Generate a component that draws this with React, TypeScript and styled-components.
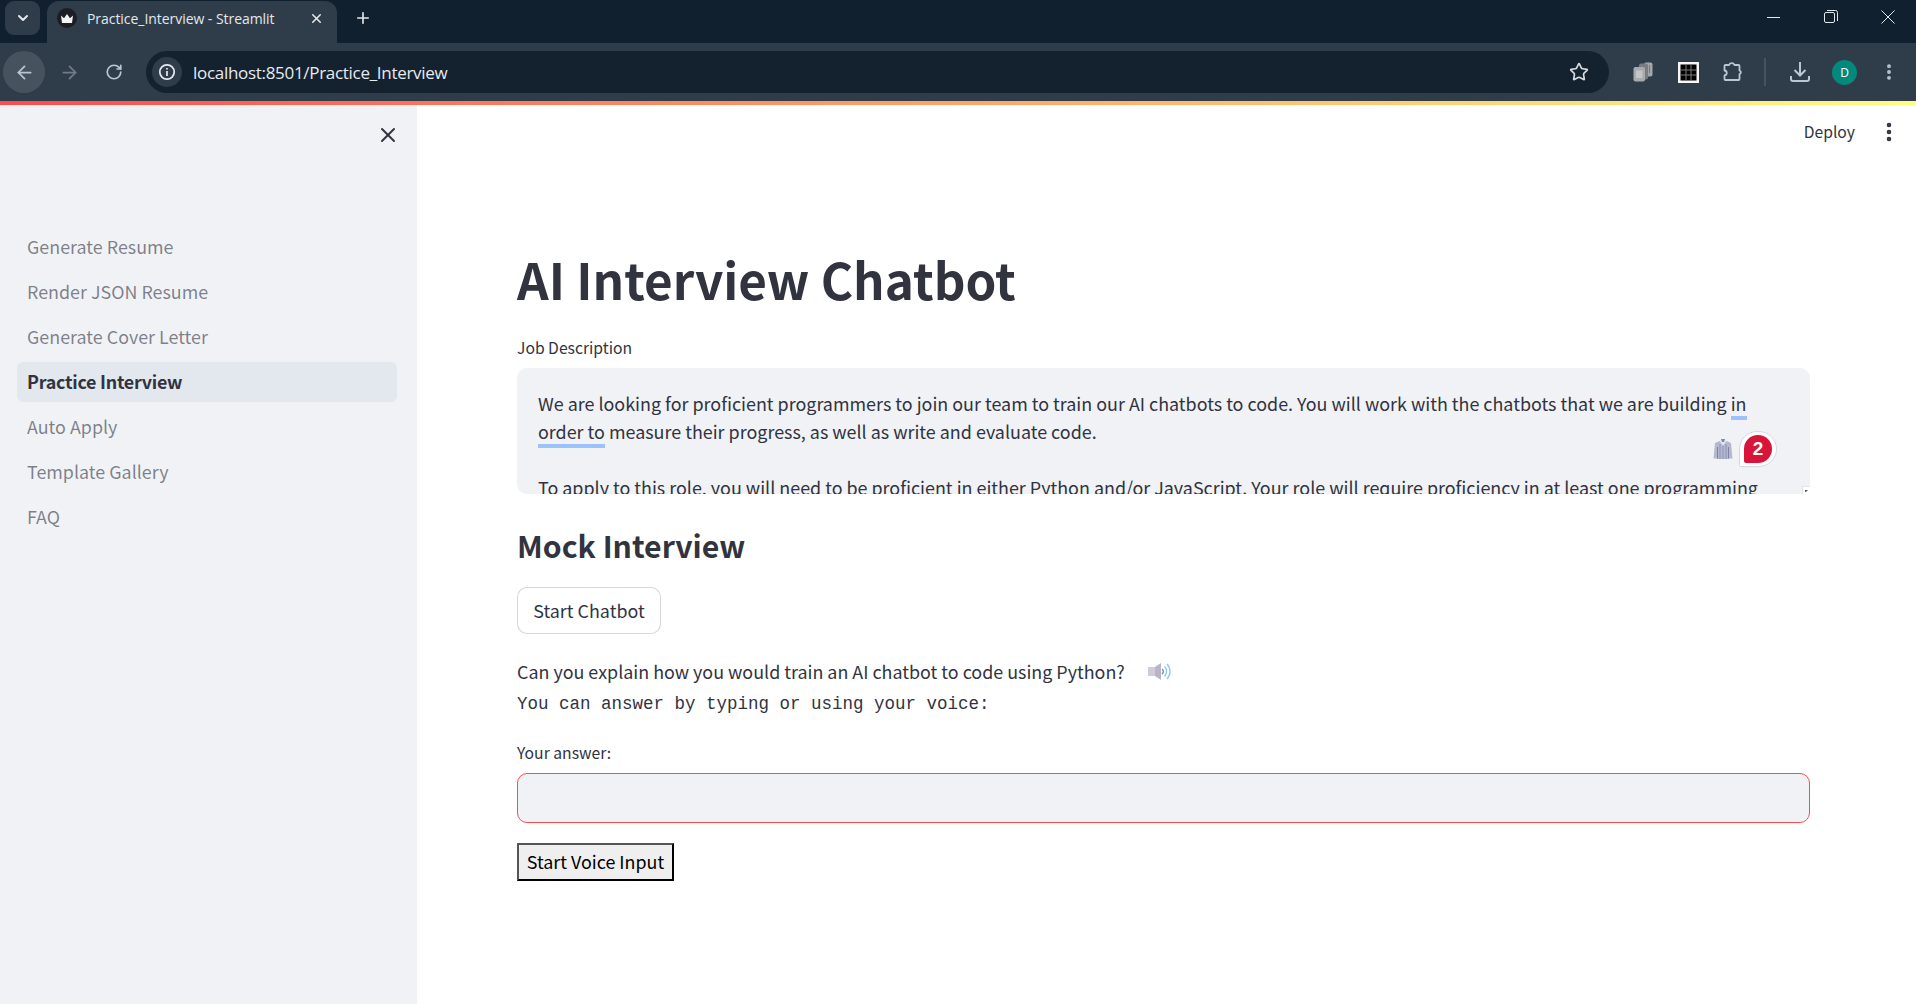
import React from 'react';
import styled, { createGlobalStyle } from 'styled-components';
import { ArrowLeft, ArrowRight, ChevronDown, EllipsisVertical, Plus, RotateCw, Star, X } from 'lucide-react';

const sans = '"Noto Sans CJK SC", "Noto Sans", sans-serif';
const chromeFont = '"Open Sans", "Noto Sans", sans-serif';

const GlobalStyle = createGlobalStyle`
  html, body {
    margin: 0;
    height: 100%;
    overflow: hidden;
    background: #fff;
  }
  #root {
    height: 100%;
  }
  * {
    box-sizing: border-box;
  }
`;

const Page = styled.div`
  display: flex;
  flex-direction: column;
  height: 1004px;
  font-family: ${sans};
  color: #31333f;
`;

const TabStrip = styled.div`
  display: flex;
  align-items: flex-start;
  height: 43px;
  background: #11202e;
  color: #e3e8ed;
`;

const TabSearch = styled.div`
  display: flex;
  align-items: center;
  justify-content: center;
  width: 35px;
  height: 34px;
  margin: 1px 7px 0 5px;
  border-radius: 9px;
  background: #2f3d4b;
`;

const Tab = styled.div`
  display: flex;
  align-items: center;
  width: 290px;
  height: 42px;
  margin-top: 1px;
  padding: 0 0 8px 10px;
  border-radius: 12px 12px 0 0;
  background: #2f3d4b;
  font-family: ${chromeFont};
  font-size: 14px;
  letter-spacing: -0.05px;
`;

const Favicon = styled.div`
  display: flex;
  align-items: center;
  justify-content: center;
  width: 20px;
  height: 20px;
  margin-right: 10px;
  border-radius: 50%;
  background: #1c1d26;
`;

const TabTitle = styled.span`
  flex: 1;
  white-space: nowrap;
`;

const TabClose = styled.div`
  display: flex;
  width: 20px;
  margin-right: 11px;
  justify-content: center;
`;

const NewTab = styled.div`
  display: flex;
  margin: 9px 0 0 17px;
`;

const WindowControls = styled.div`
  display: flex;
  align-items: center;
  margin-left: auto;
  height: 34px;
`;

const WindowButton = styled.div`
  display: flex;
  align-items: center;
  justify-content: center;
  width: 57px;
`;

const Toolbar = styled.div`
  display: flex;
  align-items: center;
  height: 58px;
  padding: 0 3px 0 3px;
  background: #2f3d4b;
  color: #b8c7d6;
`;

const NavButton = styled.div<{ $active?: boolean }>`
  display: flex;
  align-items: center;
  justify-content: center;
  flex: none;
  width: 42px;
  height: 42px;
  margin-right: 3px;
  border-radius: 50%;
  background: ${(p) => (p.$active ? '#46535f' : 'transparent')};
`;

const Omnibox = styled.div`
  display: flex;
  align-items: center;
  flex: 1;
  height: 42px;
  margin: 0 13px 0 8px;
  padding: 0 20px 0 6px;
  border-radius: 21px;
  background: #14222f;
`;

const InfoBadge = styled.div`
  display: flex;
  align-items: center;
  justify-content: center;
  width: 30px;
  height: 30px;
  margin-right: 11px;
  border-radius: 50%;
  background: #2f3d4b;
`;

const UrlText = styled.span`
  flex: 1;
  font-family: ${chromeFont};
  font-size: 17px;
  letter-spacing: -0.3px;
  color: #e6ebf0;
`;

const ToolDivider = styled.div`
  width: 2px;
  height: 28px;
  margin: 0 13px 0 7px;
  background: #46535f;
`;

const Avatar = styled.div`
  display: flex;
  align-items: center;
  justify-content: center;
  width: 25px;
  height: 25px;
  margin: 0 11px 0 8px;
  border-radius: 50%;
  background: #03897b;
  color: #fff;
  font-family: ${chromeFont};
  font-size: 12px;
`;

const Gradient = styled.div`
  height: 4px;
  background: linear-gradient(90deg, #ff4b4b, #fffd80);
`;

const Body = styled.div`
  display: flex;
  flex: 1;
  min-height: 0;
`;

const Sidebar = styled.aside`
  width: 417px;
  flex: none;
  padding: 0 20px 0 17px;
  background: #f0f2f6;
`;

const SidebarClose = styled.div`
  display: flex;
  justify-content: flex-end;
  height: 122px;
  margin-right: -3px;
  padding: 18px 0 0;
  color: #31333f;
`;

const NavList = styled.nav`
  display: flex;
  flex-direction: column;
  gap: 5px;
`;

const NavItem = styled.a<{ $active?: boolean }>`
  display: flex;
  align-items: center;
  height: 40px;
  padding: 0 0 2px 10px;
  border-radius: 6px;
  font-size: 17.9px;
  font-weight: ${(p) => (p.$active ? 600 : 400)};
  letter-spacing: ${(p) => (p.$active ? '-0.25px' : '0')};
  color: ${(p) => (p.$active ? '#31333f' : 'rgba(49, 51, 63, 0.6)')};
  background: ${(p) => (p.$active ? '#e3e7ee' : 'transparent')};
`;

const Main = styled.main`
  flex: 1;
  padding: 0 106px 0 100px;
`;

const TopBar = styled.div`
  display: flex;
  align-items: center;
  justify-content: flex-end;
  height: 53px;
  margin-right: -106px;
`;

const DeployLabel = styled.span`
  font-size: 15.7px;
  margin-right: 22px;
`;

const Kebab = styled.div`
  display: flex;
  width: 24px;
  margin-right: 15px;
  justify-content: center;
`;

const Title = styled.h1`
  margin: 88px 0 0;
  font-size: 49.4px;
  line-height: 66px;
  font-weight: 700;
`;

const FieldLabel = styled.label`
  display: block;
  font-size: 15.7px;
  line-height: 24px;
`;

const JobLabel = styled(FieldLabel)`
  margin-top: 24px;
`;

const AnswerLabel = styled(FieldLabel)`
  margin-top: 23px;
`;

const JobBox = styled.div`
  position: relative;
  height: 126px;
  margin-top: 8px;
  padding: 21px 20px 0 21px;
  overflow: hidden;
  border-radius: 10px;
  background: #f0f2f6;
  font-size: 17.92px;
  line-height: 28px;
`;

const JobText = styled.p`
  margin: 0 0 28px;
`;

const Marked = styled.span`
  border-bottom: 4px solid #9cc2fb;
`;

const ShirtMark = styled.div`
  position: absolute;
  top: 70px;
  right: 77px;
  display: flex;
`;

const CountBadge = styled.div`
  position: absolute;
  top: 63px;
  right: 33px;
  display: flex;
  align-items: center;
  justify-content: center;
  width: 38px;
  height: 36px;
  border: 1.5px solid #d5d8e2;
  border-radius: 19px 19px 19px 2px;
  background: #fff;
`;

const CountInner = styled.div`
  display: flex;
  align-items: center;
  justify-content: center;
  width: 28px;
  height: 28px;
  border-radius: 50% 50% 50% 2px;
  background: #d9143a;
  color: #fff;
  font-family: "Liberation Sans", sans-serif;
  font-size: 19px;
  font-weight: 700;
`;

const ResizeHandle = styled.div`
  position: absolute;
  right: 0;
  bottom: 0;
  display: flex;
  align-items: center;
  justify-content: center;
  width: 8px;
  height: 8px;
  border-top: 1px solid #e2e4ea;
  border-left: 1px solid #e2e4ea;
  background: #fff;
`;

const ResizeDot = styled.div`
  width: 3px;
  height: 2px;
  background: #555;
`;

const Subtitle = styled.h2`
  margin: 29px 0 0;
  font-size: 30.2px;
  line-height: 44px;
  font-weight: 600;
`;

const OutlineButton = styled.button`
  display: block;
  width: 144px;
  height: 47px;
  margin-top: 20px;
  padding: 0 0 2px;
  border: 1px solid rgba(49, 51, 63, 0.2);
  border-radius: 10px;
  background: #fff;
  color: #31333f;
  font-family: ${sans};
  font-size: 17.9px;
`;

const QuestionRow = styled.div`
  display: flex;
  align-items: center;
  margin-top: 23px;
  font-size: 17.9px;
  line-height: 28px;
`;

const SpeakerWrap = styled.span`
  display: flex;
  margin-left: 23px;
`;

const MonoLine = styled.div`
  margin-top: 5px;
  font-family: "Liberation Mono", "DejaVu Sans Mono", monospace;
  font-size: 17.5px;
  line-height: 28px;
`;

const AnswerInput = styled.div`
  height: 50px;
  margin-top: 8px;
  border: 1px solid #ff4b4b;
  border-radius: 10px;
  background: #f0f2f6;
`;

const VoiceButton = styled.button`
  display: block;
  width: 157px;
  height: 38px;
  margin-top: 20px;
  padding: 0 0 2px;
  border: 2px solid #000;
  border-top-color: #555;
  border-left-color: #555;
  background: #efefef;
  color: #000;
  font-family: ${sans};
  font-size: 17.9px;
`;

const navPages = [
  'Generate Resume',
  'Render JSON Resume',
  'Generate Cover Letter',
  'Practice Interview',
  'Auto Apply',
  'Template Gallery',
  'FAQ',
];

function Crown() {
  return (
    <svg width="14" height="11" viewBox="0 0 14 11">
      <path d="M1 2.5 4 5.2 7 1l3 4.2 3-2.7-1 7.5H2z" fill="#f4f4f4" />
    </svg>
  );
}

function InfoIcon() {
  return (
    <svg width="18" height="18" viewBox="0 0 18 18" fill="none" stroke="#e6ebf0" strokeWidth="1.7">
      <circle cx="9" cy="9" r="7.2" />
      <path d="M9 8v5M9 5v1.6" />
    </svg>
  );
}

function CopiesIcon() {
  return (
    <svg width="20" height="20" viewBox="0 0 20 20">
      <rect x="11" y="0.5" width="8.5" height="14" rx="2" fill="#a4a7a9" />
      <path d="M14 3v8M16.5 3v8" stroke="#74797e" strokeWidth="1" />
      <rect x="6" y="1.5" width="9" height="16" rx="2" fill="#797d82" />
      <rect x="0.5" y="5" width="11.5" height="14.5" rx="2" fill="#a8aaac" />
      <rect x="3" y="8.5" width="6.5" height="7.5" fill="#c4c5c6" />
    </svg>
  );
}

function GridIcon() {
  return (
    <svg width="21" height="21" viewBox="0 0 21 21">
      <rect width="21" height="21" fill="#f6f6f6" />
      <rect x="2.5" y="2.5" width="16" height="16" fill="#000" />
      <path d="M8 2.5v16M13 2.5v16M2.5 8h16M2.5 13h16" stroke="#7d7d7d" strokeWidth="1" />
    </svg>
  );
}

function PuzzleIcon() {
  return (
    <svg width="22" height="22" viewBox="0 0 22 22" fill="none" stroke="#b8c7d6" strokeWidth="1.8" strokeLinejoin="round">
      <path d="M2.5 5a1 1 0 0 1 1-1H7a3 3 0 0 1 5.5 0h4a1 1 0 0 1 1 1v4.5a1.8 1.8 0 0 1 0 3.5V18a1 1 0 0 1-1 1H3.5a1 1 0 0 1-1-1v-3.5c3-.4 3-4.6 0-5z" />
    </svg>
  );
}

function DownloadIcon() {
  return (
    <svg width="22" height="22" viewBox="0 0 22 22" fill="none" stroke="#b8c7d6" strokeWidth="2">
      <path d="M11 1v13M5.5 9l5.5 5.5 5.5-5.5M2 15v3a2 2 0 0 0 2 2h14a2 2 0 0 0 2-2v-3" />
    </svg>
  );
}

function Minimize() {
  return (
    <svg width="14" height="14" viewBox="0 0 14 14" stroke="#e3e8ed" strokeWidth="1">
      <path d="M0 7.5h13" />
    </svg>
  );
}

function Restore() {
  return (
    <svg width="14" height="14" viewBox="0 0 14 14" fill="none" stroke="#e3e8ed" strokeWidth="1">
      <rect x="0.5" y="2.5" width="10" height="10" rx="1.5" />
      <path d="M3 0.5h8.5a2 2 0 0 1 2 2V11" />
    </svg>
  );
}

function CloseThin() {
  return (
    <svg width="14" height="14" viewBox="0 0 14 14" stroke="#e3e8ed" strokeWidth="1">
      <path d="M0.5 0.5l13 13M13.5 0.5l-13 13" />
    </svg>
  );
}

function ShirtIcon() {
  return (
    <svg width="20" height="22" viewBox="0 0 20 22">
      <path d="M6.5 3 2 5 0.5 20.5H4V21h12v-.5h3.5L18 5l-4.5-2z" fill="#b4b9d0" />
      <path d="M4.5 9v11.5M15.5 9v11.5" stroke="#7c83a3" strokeWidth="1" />
      <path d="M7 6v15M10 6v15M13 6v15" stroke="#8d94b1" strokeWidth="1" />
      <path d="M6.5 3 10 8l3.5-5-1.5-1.5H8z" fill="#e4e6ef" />
      <path d="M8 1h4l-1 3H9z" fill="#8088a6" />
    </svg>
  );
}

function SpeakerIcon() {
  return (
    <svg width="23" height="18" viewBox="0 0 23 18" fill="none">
      <path d="M0 5h7v9H0z" fill="#cfccd9" />
      <path d="M7 5l6-4v17l-6-4z" fill="#b9b5c9" />
      <path d="M14 7a3 3 0 0 1 0 5" stroke="#8f8aa5" strokeWidth="1.5" />
      <path d="M16.5 4.5a7 7 0 0 1 0 10M19 2a11 11 0 0 1 0 15" stroke="#8fc8f8" strokeWidth="1.4" />
    </svg>
  );
}

export default function App() {
  return (
    <Page>
      <GlobalStyle />
      <TabStrip>
        <TabSearch>
          <ChevronDown size={16} strokeWidth={3} />
        </TabSearch>
        <Tab>
          <Favicon>
            <Crown />
          </Favicon>
          <TabTitle>Practice_Interview - Streamlit</TabTitle>
          <TabClose>
            <X size={15} strokeWidth={2.5} />
          </TabClose>
        </Tab>
        <NewTab>
          <Plus size={18} strokeWidth={2.2} />
        </NewTab>
        <WindowControls>
          <WindowButton>
            <Minimize />
          </WindowButton>
          <WindowButton>
            <Restore />
          </WindowButton>
          <WindowButton>
            <CloseThin />
          </WindowButton>
        </WindowControls>
      </TabStrip>
      <Toolbar>
        <NavButton $active>
          <ArrowLeft size={21} />
        </NavButton>
        <NavButton>
          <ArrowRight size={21} color="#6f7c88" />
        </NavButton>
        <NavButton>
          <RotateCw size={18} strokeWidth={2.2} />
        </NavButton>
        <Omnibox>
          <InfoBadge>
            <InfoIcon />
          </InfoBadge>
          <UrlText>localhost:8501/Practice_Interview</UrlText>
          <Star size={20} strokeWidth={2} color="#d5dbe1" />
        </Omnibox>
        <NavButton>
          <CopiesIcon />
        </NavButton>
        <NavButton>
          <GridIcon />
        </NavButton>
        <NavButton>
          <PuzzleIcon />
        </NavButton>
        <ToolDivider />
        <NavButton>
          <DownloadIcon />
        </NavButton>
        <Avatar>D</Avatar>
        <NavButton>
          <EllipsisVertical size={20} strokeWidth={2.6} />
        </NavButton>
      </Toolbar>
      <Gradient />
      <Body>
        <Sidebar>
          <SidebarClose>
            <X size={24} strokeWidth={2} />
          </SidebarClose>
          <NavList>
            {navPages.map((page) => (
              <NavItem key={page} $active={page === 'Practice Interview'}>
                {page}
              </NavItem>
            ))}
          </NavList>
        </Sidebar>
        <Main>
          <TopBar>
            <DeployLabel>Deploy</DeployLabel>
            <Kebab>
              <EllipsisVertical size={24} strokeWidth={2.6} />
            </Kebab>
          </TopBar>
          <Title>AI Interview Chatbot</Title>
          <JobLabel>Job Description</JobLabel>
          <JobBox>
            <JobText>
              We are looking for proficient programmers to join our team to train our AI chatbots to code. You will work
              with the chatbots that we are building <Marked>in order to</Marked> measure their progress, as well as
              write and evaluate code.
            </JobText>
            <JobText>
              To apply to this role, you will need to be proficient in either Python and/or JavaScript. Your role will
              require proficiency in at least one programming language.
            </JobText>
            <ShirtMark>
              <ShirtIcon />
            </ShirtMark>
            <CountBadge>
              <CountInner>2</CountInner>
            </CountBadge>
            <ResizeHandle>
              <ResizeDot />
            </ResizeHandle>
          </JobBox>
          <Subtitle>Mock Interview</Subtitle>
          <OutlineButton>Start Chatbot</OutlineButton>
          <QuestionRow>
            Can you explain how you would train an AI chatbot to code using Python?
            <SpeakerWrap>
              <SpeakerIcon />
            </SpeakerWrap>
          </QuestionRow>
          <MonoLine>You can answer by typing or using your voice:</MonoLine>
          <AnswerLabel>Your answer:</AnswerLabel>
          <AnswerInput />
          <VoiceButton>Start Voice Input</VoiceButton>
        </Main>
      </Body>
    </Page>
  );
}
